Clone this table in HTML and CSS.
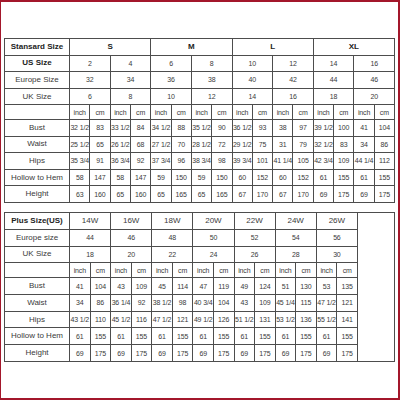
FILE: index.html
```html
<!DOCTYPE html>
<html>
<head>
<meta charset="utf-8">
<link rel="stylesheet" href="styles.css">
</head>
<body>
<div class="frame">
  <table class="chart chart-std">
    <colgroup>
      <col class="c-label">
      <col><col><col><col><col><col><col><col><col><col><col><col><col><col><col><col>
    </colgroup>
    <tr class="hd">
      <td class="lbl b">Stansard Size</td>
      <td colspan="4" class="lbl b">S</td>
      <td colspan="4" class="lbl b">M</td>
      <td colspan="4" class="lbl b">L</td>
      <td colspan="4" class="lbl b">XL</td>
    </tr>
    <tr>
      <td class="lbl b">US Size</td>
      <td colspan="2">2</td><td colspan="2">4</td><td colspan="2">6</td><td colspan="2">8</td>
      <td colspan="2">10</td><td colspan="2">12</td><td colspan="2">14</td><td colspan="2">16</td>
    </tr>
    <tr>
      <td class="lbl">Europe Size</td>
      <td colspan="2">32</td><td colspan="2">34</td><td colspan="2">36</td><td colspan="2">38</td>
      <td colspan="2">40</td><td colspan="2">42</td><td colspan="2">44</td><td colspan="2">46</td>
    </tr>
    <tr>
      <td class="lbl">UK Size</td>
      <td colspan="2">6</td><td colspan="2">8</td><td colspan="2">10</td><td colspan="2">12</td>
      <td colspan="2">14</td><td colspan="2">16</td><td colspan="2">18</td><td colspan="2">20</td>
    </tr>
    <tr>
      <td></td>
      <td>inch</td><td>cm</td><td>inch</td><td>cm</td><td>inch</td><td>cm</td><td>inch</td><td>cm</td>
      <td>inch</td><td>cm</td><td>inch</td><td>cm</td><td>inch</td><td>cm</td><td>inch</td><td>cm</td>
    </tr>
    <tr>
      <td class="lbl">Bust</td>
      <td>32 1/2</td><td>83</td><td>33 1/2</td><td>84</td><td>34 1/2</td><td>88</td><td>35 1/2</td><td>90</td>
      <td>36 1/2</td><td>93</td><td>38</td><td>97</td><td>39 1/2</td><td>100</td><td>41</td><td>104</td>
    </tr>
    <tr>
      <td class="lbl">Waist</td>
      <td>25 1/2</td><td>65</td><td>26 1/2</td><td>68</td><td>27 1/2</td><td>70</td><td>28 1/2</td><td>72</td>
      <td>29 1/2</td><td>75</td><td>31</td><td>79</td><td>32 1/2</td><td>83</td><td>34</td><td>86</td>
    </tr>
    <tr>
      <td class="lbl">Hips</td>
      <td>35 3/4</td><td>91</td><td>36 3/4</td><td>92</td><td>37 3/4</td><td>96</td><td>38 3/4</td><td>98</td>
      <td>39 3/4</td><td>101</td><td>41 1/4</td><td>105</td><td>42 3/4</td><td>109</td><td>44 1/4</td><td>112</td>
    </tr>
    <tr>
      <td class="lbl">Hollow to Hem</td>
      <td>58</td><td>147</td><td>58</td><td>147</td><td>59</td><td>150</td><td>59</td><td>150</td>
      <td>60</td><td>152</td><td>60</td><td>152</td><td>61</td><td>155</td><td>61</td><td>155</td>
    </tr>
    <tr>
      <td class="lbl">Height</td>
      <td>63</td><td>160</td><td>65</td><td>160</td><td>65</td><td>165</td><td>65</td><td>165</td>
      <td>67</td><td>170</td><td>67</td><td>170</td><td>69</td><td>175</td><td>69</td><td>175</td>
    </tr>
  </table>

  <table class="chart chart-plus">
    <colgroup>
      <col class="c-label">
      <col><col><col><col><col><col><col><col><col><col><col><col><col><col>
      <col class="c-empty">
    </colgroup>
    <tr>
      <td class="lbl b">Plus Size(US)</td>
      <td colspan="2" class="lbl">14W</td><td colspan="2" class="lbl">16W</td><td colspan="2" class="lbl">18W</td><td colspan="2" class="lbl">20W</td>
      <td colspan="2" class="lbl">22W</td><td colspan="2" class="lbl">24W</td><td colspan="2" class="lbl">26W</td>
      <td rowspan="9"></td>
    </tr>
    <tr>
      <td class="lbl">Europe size</td>
      <td colspan="2">44</td><td colspan="2">46</td><td colspan="2">48</td><td colspan="2">50</td>
      <td colspan="2">52</td><td colspan="2">54</td><td colspan="2">56</td>
    </tr>
    <tr>
      <td class="lbl">UK Size</td>
      <td colspan="2">18</td><td colspan="2">20</td><td colspan="2">22</td><td colspan="2">24</td>
      <td colspan="2">26</td><td colspan="2">28</td><td colspan="2">30</td>
    </tr>
    <tr>
      <td></td>
      <td>inch</td><td>cm</td><td>inch</td><td>cm</td><td>inch</td><td>cm</td><td>inch</td><td>cm</td>
      <td>inch</td><td>cm</td><td>inch</td><td>cm</td><td>inch</td><td>cm</td>
    </tr>
    <tr>
      <td class="lbl">Bust</td>
      <td>41</td><td>104</td><td>43</td><td>109</td><td>45</td><td>114</td><td>47</td><td>119</td>
      <td>49</td><td>124</td><td>51</td><td>130</td><td>53</td><td>135</td>
    </tr>
    <tr>
      <td class="lbl">Waist</td>
      <td>34</td><td>86</td><td>36 1/4</td><td>92</td><td>38 1/2</td><td>98</td><td>40 3/4</td><td>104</td>
      <td>43</td><td>109</td><td>45 1/4</td><td>115</td><td>47 1/2</td><td>121</td>
    </tr>
    <tr>
      <td class="lbl">Hips</td>
      <td>43 1/2</td><td>110</td><td>45 1/2</td><td>116</td><td>47 1/2</td><td>121</td><td>49 1/2</td><td>126</td>
      <td>51 1/2</td><td>131</td><td>53 1/2</td><td>136</td><td>55 1/2</td><td>141</td>
    </tr>
    <tr>
      <td class="lbl">Hollow to Hem</td>
      <td>61</td><td>155</td><td>61</td><td>155</td><td>61</td><td>155</td><td>61</td><td>155</td>
      <td>61</td><td>155</td><td>61</td><td>155</td><td>61</td><td>155</td>
    </tr>
    <tr>
      <td class="lbl">Height</td>
      <td>69</td><td>175</td><td>69</td><td>175</td><td>69</td><td>175</td><td>69</td><td>175</td>
      <td>69</td><td>175</td><td>69</td><td>175</td><td>69</td><td>175</td>
    </tr>
  </table>
</div>
</body>
</html>
```

FILE: styles.css
```css
html, body {
  margin: 0;
  padding: 0;
  background: #ffffff;
}

.frame {
  width: 400px;
  height: 400px;
  box-sizing: border-box;
  border: 2px solid #a3172b;
  border-left-width: 1px;
  padding: 36px 0 0 3px;
  display: flex;
  flex-direction: column;
  gap: 9px;
  background: #ffffff;
}

.chart {
  width: 391px;
  table-layout: fixed;
  border-collapse: collapse;
  font-family: "Liberation Sans", Arial, sans-serif;
  font-size: 7px;
  color: #3a3a3a;
}

.chart-std {
  height: 165px;
}

.chart-plus {
  height: 150px;
}

.chart td {
  border: 1px solid #4d4d4d;
  padding: 0;
  text-align: center;
  vertical-align: middle;
  white-space: nowrap;
  line-height: 1;
  letter-spacing: -0.15px;
}

.chart td.lbl {
  font-size: 8px;
  letter-spacing: 0;
}

.c-label {
  width: 65px;
}

.chart-plus .c-empty {
  width: 37px;
}

.b {
  font-weight: bold;
  color: #222222;
}
```
